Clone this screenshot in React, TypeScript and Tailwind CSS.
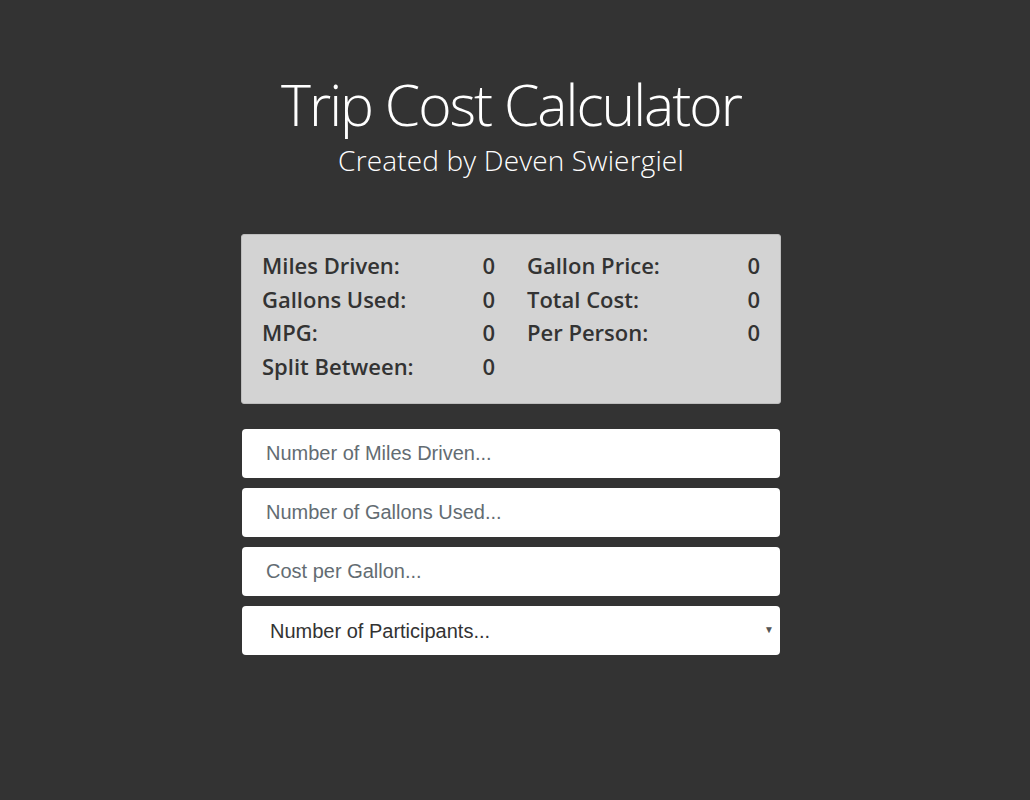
import React from "react";

const stats: [string, string][][] = [
  [
    ["Miles Driven:", "0"],
    ["Gallons Used:", "0"],
    ["MPG:", "0"],
    ["Split Between:", "0"],
  ],
  [
    ["Gallon Price:", "0"],
    ["Total Cost:", "0"],
    ["Per Person:", "0"],
  ],
];

export default function App() {
  return (
    <div className="min-h-[800px] w-full bg-[#333333] pr-[8px] pt-[68px]" style={{ fontFamily: '"Open Sans", sans-serif' }}>
      <div className="mx-auto flex w-[540px] flex-col items-center">
        <h1 className="whitespace-nowrap text-center text-[57px] font-light leading-[72px] text-white tracking-[-2px]">
          Trip Cost Calculator
        </h1>
        <h2 className="mt-[2px] whitespace-nowrap text-center text-[28px] font-light leading-[36px] text-white tracking-[0.15px]">
          Created by Deven Swiergiel
        </h2>
        <div className="mt-[56px] flex h-[170px] w-[540px] gap-[32px] rounded-[3px] border border-[#bdbdbd] bg-[#d3d3d3] px-[20px] pt-[14px]">
          {stats.map((col, i) => (
            <div key={i} className="flex w-[233px] flex-col">
              {col.map(([label, val]) => (
                <div key={label} className="flex justify-between text-[22px] font-semibold leading-[33.7px] text-[#333333]">
                  <span>{label}</span>
                  <span>{val}</span>
                </div>
              ))}
            </div>
          ))}
        </div>
        <div className="mt-[25px] flex w-[538px] flex-col gap-[10px]" style={{ fontFamily: '"Liberation Sans", Arial, sans-serif' }}>
          <input
            className="h-[49px] w-full rounded-[4px] bg-white px-[24px] text-[20px] text-[#464a4c] outline-none placeholder:text-[#636c72]"
            placeholder="Number of Miles Driven..."
          />
          <input
            className="h-[49px] w-full rounded-[4px] bg-white px-[24px] text-[20px] text-[#464a4c] outline-none placeholder:text-[#636c72]"
            placeholder="Number of Gallons Used..."
          />
          <input
            className="h-[49px] w-full rounded-[4px] bg-white px-[24px] text-[20px] text-[#464a4c] outline-none placeholder:text-[#636c72]"
            placeholder="Cost per Gallon..."
          />
          <div className="relative h-[49px] w-full rounded-[4px] bg-white">
            <select className="h-full w-full appearance-none bg-transparent pl-[28px] text-[20px] text-[#333333] outline-none">
              <option>Number of Participants...</option>
            </select>
            <span className="pointer-events-none absolute right-[6px] top-[16px] text-[10px] text-[#555555]">▼</span>
          </div>
        </div>
      </div>
    </div>
  );
}
